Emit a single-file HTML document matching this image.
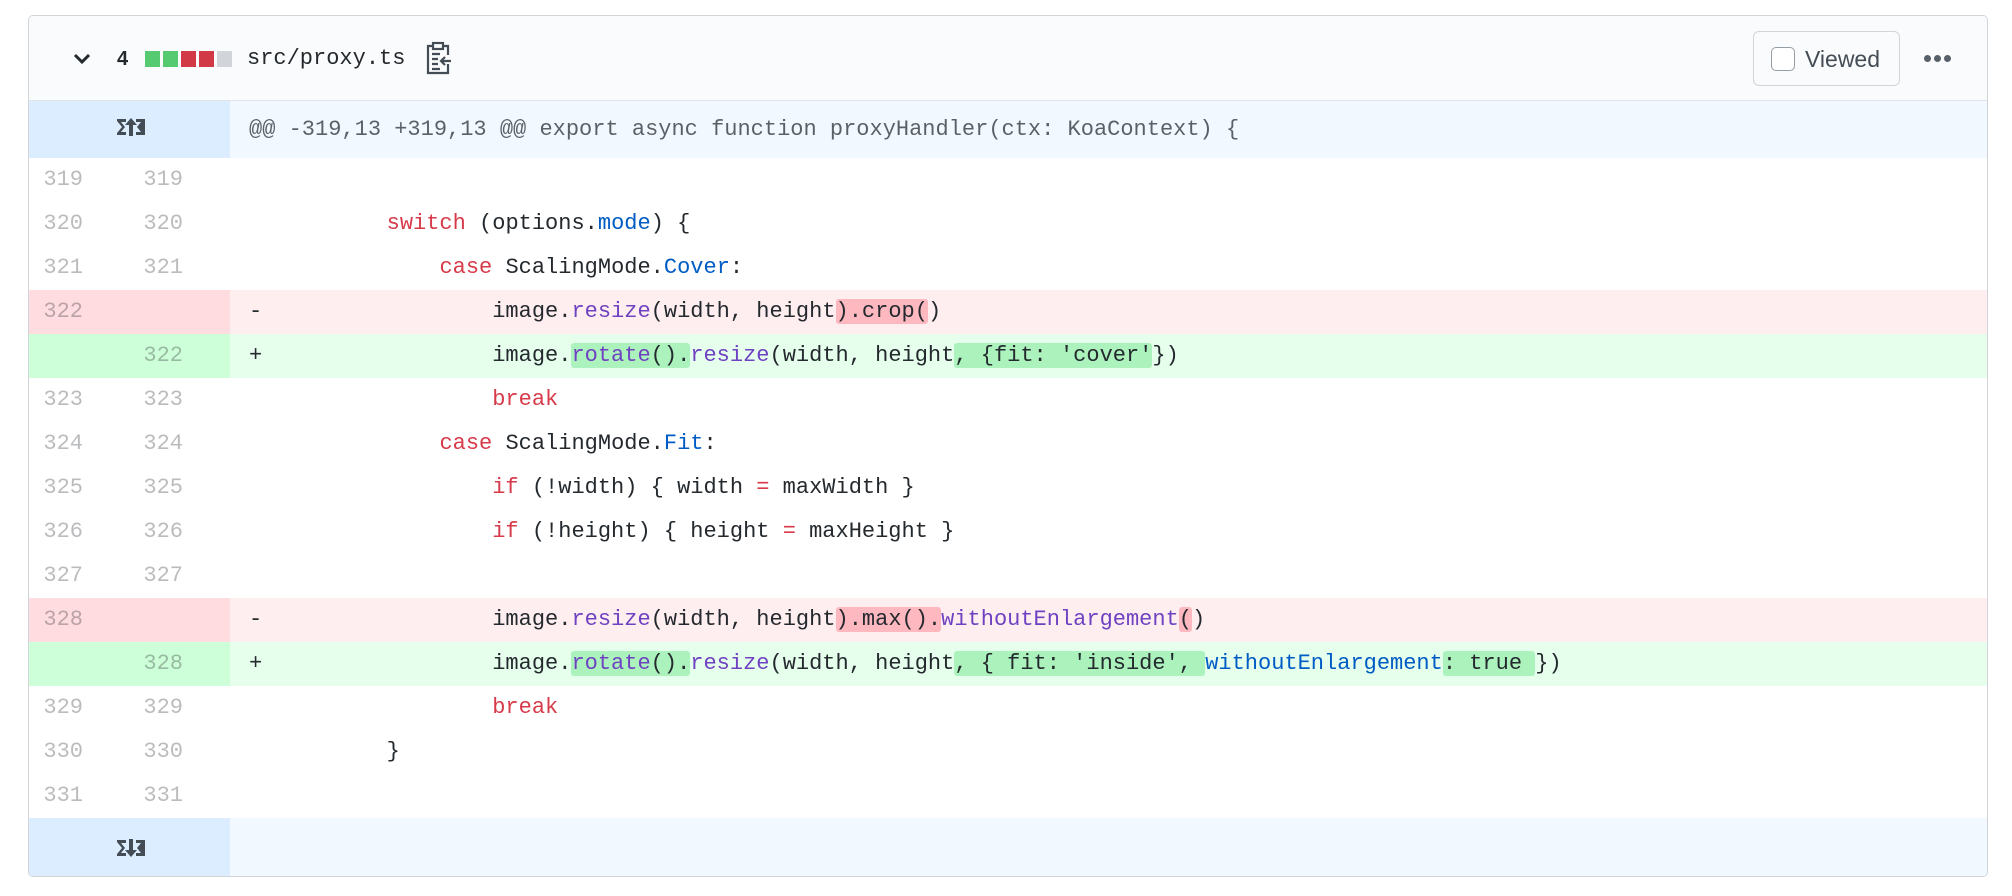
<!DOCTYPE html>
<html><head><meta charset="utf-8"><style>
*{box-sizing:border-box;margin:0;padding:0}
body{width:2012px;height:896px;background:#fff;position:relative;overflow:hidden;font-family:"Liberation Sans",sans-serif}
.box{position:absolute;left:28px;top:15px;width:1960px;height:862px;border:1px solid #d1d5da;border-radius:5px;overflow:hidden}
.hdr{position:absolute;left:0;top:0;width:100%;height:85px;background:#fafbfc;border-bottom:1px solid #e1e4e8}
.mono{font-family:"Liberation Mono",monospace}
.row{position:absolute;left:0;width:100%;height:44px;font-family:"Liberation Mono",monospace;font-size:22px;line-height:44px;color:#24292e;white-space:pre}
.g{position:absolute;left:0;top:0;width:201px;height:100%}
.n1,.n2{position:absolute;top:0;width:40px;text-align:right;color:rgba(27,31,35,.3)}
.n1{left:14px}.n2{left:114px}
.mk{position:absolute;left:220px;top:0}
.c{position:absolute;left:252px;top:0}
.k{color:#d73a49}.f{color:#6f42c1}.p{color:#005cc5}
.dx{background:#fdb8c0;border-radius:3px}.ax{background:#acf2bd;border-radius:3px}
.del{background:#ffeef0}.del .g{background:#ffdce0}
.add{background:#e6ffed}.add .g{background:#cdffd8}
.hunk{background:#f1f8ff;height:57px;line-height:57px;color:rgba(27,31,35,.7)}
.hunk .g{background:#dbedff}
</style></head><body>
<div class="box">
 <div class="hdr">
  <svg style="position:absolute;left:44px;top:36px" width="18" height="14" viewBox="0 0 18 14"><path d="M2 3l7 7 7-7" fill="none" stroke="#24292e" stroke-width="3"/></svg>
  <div style="position:absolute;left:88px;top:28px;font-size:20px;font-weight:bold;color:#24292e;line-height:30px">4</div>
  <div style="position:absolute;left:116px;top:35px;width:15px;height:16px;background:#2cbe4e;opacity:.8"></div>
  <div style="position:absolute;left:134px;top:35px;width:15px;height:16px;background:#2cbe4e;opacity:.8"></div>
  <div style="position:absolute;left:152px;top:35px;width:15px;height:16px;background:#cb2431;opacity:.9"></div>
  <div style="position:absolute;left:170px;top:35px;width:15px;height:16px;background:#cb2431;opacity:.9"></div>
  <div style="position:absolute;left:188px;top:35px;width:15px;height:16px;background:#d1d5da"></div>
  <div class="mono" style="position:absolute;left:218px;top:27px;font-size:22px;line-height:32px;color:#24292e">src/proxy.ts</div>
  <svg style="position:absolute;left:396px;top:25px" width="28" height="34" viewBox="0 0 28 34" fill="none" stroke="#444d56" stroke-width="2.2"><path d="M8 5H3v27h20v-9M23 14V5h-5"/><rect x="8" y="2" width="10" height="6"/><path d="M7 13h8M7 18h6M7 23h6M7 28h8M26 20h-9M20 16l-4 4 4 4"/></svg>
  <div style="position:absolute;left:1724px;top:15px;width:147px;height:55px;border:1px solid #d1d5da;border-radius:6px;background:#fafbfc"></div>
  <div style="position:absolute;left:1742px;top:31px;width:24px;height:24px;border:1px solid #959da5;border-radius:5px;background:#fff"></div>
  <div style="position:absolute;left:1776px;top:26px;font-size:23px;line-height:34px;color:#444d56">Viewed</div>
  <div style="position:absolute;left:1895px;top:39px;width:7px;height:7px;border-radius:50%;background:#586069"></div>
  <div style="position:absolute;left:1905px;top:39px;width:7px;height:7px;border-radius:50%;background:#586069"></div>
  <div style="position:absolute;left:1915px;top:39px;width:7px;height:7px;border-radius:50%;background:#586069"></div>
 </div>
 <div class="row hunk" style="top:85px"><div class="g"><svg style="position:absolute;left:87px;top:16px" width="30" height="20" viewBox="0 0 30 20" fill="#444d56"><path d="M1 2h9v3H5l4 5-4 5h5v3H1v-2l5-6-5-6zM15 1l6 7h-4v11h-4V8H9zM20 2h9v16h-9v-3h5l-4-5 4-5h-5z"/></svg></div><span class="c" style="left:220px">@@ -319,13 +319,13 @@ export async function proxyHandler(ctx: KoaContext) {</span></div>
 <div class="row" style="top:142px"><div class="g"><span class="n1">319</span><span class="n2">319</span></div></div>
 <div class="row" style="top:186px"><div class="g"><span class="n1">320</span><span class="n2">320</span></div><span class="c">        <span class="k">switch</span> (options.<span class="p">mode</span>) {</span></div>
 <div class="row" style="top:230px"><div class="g"><span class="n1">321</span><span class="n2">321</span></div><span class="c">            <span class="k">case</span> ScalingMode.<span class="p">Cover</span>:</span></div>
 <div class="row del" style="top:274px"><div class="g"><span class="n1">322</span></div><span class="mk">-</span><span class="c">                image.<span class="f">resize</span>(width, height<span class="dx">).crop(</span>)</span></div>
 <div class="row add" style="top:318px"><div class="g"><span class="n2">322</span></div><span class="mk">+</span><span class="c">                image.<span class="ax"><span class="f">rotate</span>().</span><span class="f">resize</span>(width, height<span class="ax">, {fit: 'cover'</span>})</span></div>
 <div class="row" style="top:362px"><div class="g"><span class="n1">323</span><span class="n2">323</span></div><span class="c">                <span class="k">break</span></span></div>
 <div class="row" style="top:406px"><div class="g"><span class="n1">324</span><span class="n2">324</span></div><span class="c">            <span class="k">case</span> ScalingMode.<span class="p">Fit</span>:</span></div>
 <div class="row" style="top:450px"><div class="g"><span class="n1">325</span><span class="n2">325</span></div><span class="c">                <span class="k">if</span> (!width) { width <span class="k">=</span> maxWidth }</span></div>
 <div class="row" style="top:494px"><div class="g"><span class="n1">326</span><span class="n2">326</span></div><span class="c">                <span class="k">if</span> (!height) { height <span class="k">=</span> maxHeight }</span></div>
 <div class="row" style="top:538px"><div class="g"><span class="n1">327</span><span class="n2">327</span></div></div>
 <div class="row del" style="top:582px"><div class="g"><span class="n1">328</span></div><span class="mk">-</span><span class="c">                image.<span class="f">resize</span>(width, height<span class="dx">).max().</span><span class="f">withoutEnlargement</span><span class="dx">(</span>)</span></div>
 <div class="row add" style="top:626px"><div class="g"><span class="n2">328</span></div><span class="mk">+</span><span class="c">                image.<span class="ax"><span class="f">rotate</span>().</span><span class="f">resize</span>(width, height<span class="ax">, { fit: 'inside', </span><span class="p">withoutEnlargement</span><span class="ax">: true </span>})</span></div>
 <div class="row" style="top:670px"><div class="g"><span class="n1">329</span><span class="n2">329</span></div><span class="c">                <span class="k">break</span></span></div>
 <div class="row" style="top:714px"><div class="g"><span class="n1">330</span><span class="n2">330</span></div><span class="c">        }</span></div>
 <div class="row" style="top:758px"><div class="g"><span class="n1">331</span><span class="n2">331</span></div></div>
 <div class="row hunk" style="top:802px;height:60px"><div class="g"><svg style="position:absolute;left:87px;top:20px" width="30" height="20" viewBox="0 0 30 20" fill="#444d56"><path d="M1 2h9v3H5l4 5-4 5h5v3H1v-2l5-6-5-6zM15 19l6-7h-4V1h-4v11H9zM20 2h9v16h-9v-3h5l-4-5 4-5h-5z"/></svg></div></div>
</div>
</body></html>
